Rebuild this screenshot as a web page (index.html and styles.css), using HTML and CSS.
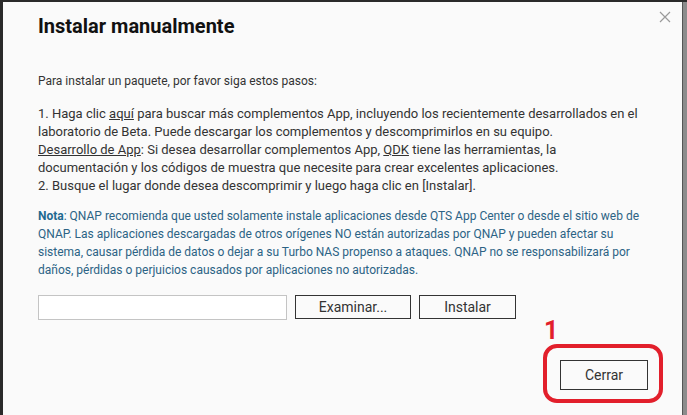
FILE: index.html
```html
<!DOCTYPE html>
<html lang="es">
<head>
  <meta charset="UTF-8" />
  <title>Instalar manualmente</title>
  <link rel="stylesheet" href="styles.css">
</head>
<body>
  <div class="screen">
    <div class="left-strip"></div>

    <!-- Ventana de instalacion manual -->
    <div class="dialog">
      <button class="close-x" aria-label="Cerrar">
        <svg width="12" height="12" viewBox="0 0 12 12"><path d="M1 1 L11 11 M11 1 L1 11" stroke="#9a9a9a" stroke-width="1.2" fill="none"/></svg>
      </button>
      <h1>Instalar manualmente</h1>

      <p class="intro">Para instalar un paquete, por favor siga estos pasos:</p>

      <p class="steps">
        1. Haga clic <a href="#">aquí</a> para buscar más complementos App, incluyendo los recientemente desarrollados en el<br>
        laboratorio de Beta. Puede descargar los complementos y descomprimirlos en su equipo.<br>
        <a href="#">Desarrollo de App</a>: Si desea desarrollar complementos App, <a href="#">QDK</a> tiene las herramientas, la<br>
        documentación y los códigos de muestra que necesite para crear excelentes aplicaciones.<br>
        2. Busque el lugar donde desea descomprimir y luego haga clic en [Instalar].
      </p>

      <p class="note">
        <b>Nota</b>: QNAP recomienda que usted solamente instale aplicaciones desde QTS App Center o desde el sitio web de<br>
        QNAP. Las aplicaciones descargadas de otros orígenes NO están autorizadas por QNAP y pueden afectar su<br>
        sistema, causar pérdida de datos o dejar a su Turbo NAS propenso a ataques. QNAP no se responsabilizará por<br>
        daños, pérdidas o perjuicios causados por aplicaciones no autorizadas.
      </p>

      <div class="file-row">
        <input class="file-input" type="text" />
        <button class="btn btn-browse">Examinar...</button>
        <button class="btn btn-install">Instalar</button>
      </div>

      <div class="footer">
        <div class="mark">
          <span class="mark-num">1</span>
          <button class="btn btn-close">Cerrar</button>
        </div>
      </div>
    </div>

    <div class="right-strip"></div>
  </div>
</body>
</html>
```

FILE: styles.css
```css
body {
  margin: 0;
  padding: 0;
  background: #2a2a2a;
  font-family: 'Roboto', 'Liberation Sans', sans-serif;
  color: #333;
  overflow: hidden;
}

.screen {
  display: flex;
  height: 415px;
  padding-top: 2px;
  box-sizing: border-box;
}

.left-strip {
  width: 3px;
  background: #2a2a2a;
}

.right-strip {
  flex: 1;
  background: #8c8c8c;
}

.dialog {
  position: relative;
  width: 680px;
  background: #fafafa;
  border-right: 1px solid #555;
  box-sizing: border-box;
  padding: 11px 0 0 35px;
}

.close-x {
  position: absolute;
  top: 9px;
  right: 11px;
  background: none;
  border: none;
  padding: 0;
  cursor: pointer;
}

h1 {
  font-size: 20px;
  font-weight: 700;
  color: #111;
  margin: 0;
  line-height: 26px;
}

p {
  font-size: 12px;
  line-height: 18px;
  margin: 0;
  white-space: nowrap;
}

.intro {
  margin-top: 33px;
}

.steps {
  font-size: 13px;
  margin-top: 15px;
}

.steps a {
  color: #333;
  text-decoration: underline;
}

.note {
  margin-top: 12px;
  color: #2c6385;
}

.note b {
  color: #1f6a90;
}

.file-row {
  display: flex;
  gap: 8px;
  margin-top: 16px;
}

.file-input {
  width: 249px;
  height: 25px;
  box-sizing: border-box;
  border: 1px solid #c4c4c4;
  background: #fff;
  margin: 0;
}

.btn {
  font-family: 'Roboto', 'Liberation Sans', sans-serif;
  font-size: 14px;
  color: #333;
  background: #fafafa;
  border: 1px solid #333;
  height: 24px;
  padding: 0;
  cursor: pointer;
}

.btn-browse {
  width: 116px;
}

.btn-install {
  width: 97px;
}

.footer {
  display: flex;
  justify-content: flex-end;
  margin-top: 24px;
  padding-right: 19px;
}

.mark {
  position: relative;
  border: 4px solid #e21f2b;
  border-radius: 14px;
  padding: 12px 11px 9px 13px;
}

.mark-num {
  position: absolute;
  left: -3px;
  top: -30px;
  color: #e21f2b;
  font-weight: 700;
  font-size: 25px;
  line-height: 26px;
}

.btn-close {
  width: 88px;
  height: 30px;
  display: block;
}
```
